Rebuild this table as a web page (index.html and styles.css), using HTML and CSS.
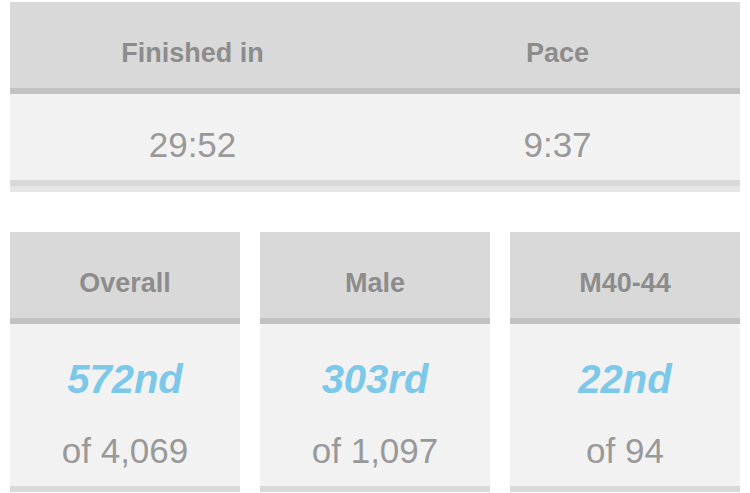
FILE: index.html
```html
<!doctype html>
<html lang="en">
<head>
    <meta charset="UTF-8">
    <meta name="viewport" content="width=device-width, initial-scale=1.0">
    <title>Race Result</title>
    <link rel="stylesheet" href="styles.css">
</head>
<body>
    <section class="result--summary">
        <div class="summary--col">
            <div class="panel--head">Finished in</div>
            <div class="panel--body">29:52</div>
        </div>
        <div class="summary--col">
            <div class="panel--head">Pace</div>
            <div class="panel--body">9:37</div>
        </div>
    </section>

    <section class="result--places">
        <div class="place--card">
            <div class="panel--head">Overall</div>
            <div class="place--body">
                <div class="place--rank">572nd</div>
                <div class="place--total">of 4,069</div>
            </div>
        </div>
        <div class="place--card">
            <div class="panel--head">Male</div>
            <div class="place--body">
                <div class="place--rank">303rd</div>
                <div class="place--total">of 1,097</div>
            </div>
        </div>
        <div class="place--card">
            <div class="panel--head">M40-44</div>
            <div class="place--body">
                <div class="place--rank">22nd</div>
                <div class="place--total">of 94</div>
            </div>
        </div>
    </section>
</body>
</html>
```

FILE: styles.css
```css
* {
    box-sizing: border-box;
}

body {
    margin: 2px 10px 0;
    background: #ffffff;
    font-family: "Liberation Sans", Arial, sans-serif;
    text-align: center;
}

.result--summary {
    display: grid;
    grid-template-columns: 1fr 1fr;
    border-bottom: 6px solid #e6e6e6;
}

.panel--head {
    height: 92px;
    padding-top: 36px;
    background: #d9d9d9;
    border-bottom: 6px solid #c2c2c2;
    color: #8c8c8c;
    font-size: 27px;
    font-weight: bold;
    line-height: 30px;
}

.panel--body {
    height: 92px;
    padding-top: 31px;
    background: #f2f2f2;
    border-bottom: 6px solid #d9d9d9;
    color: #999999;
    font-size: 35px;
    line-height: 40px;
}

.result--places {
    display: grid;
    grid-template-columns: repeat(3, 1fr);
    gap: 20px;
    margin-top: 40px;
}

.place--body {
    height: 168px;
    padding-top: 32px;
    background: #f2f2f2;
    border-bottom: 6px solid #d9d9d9;
}

.place--rank {
    color: #7cc8e8;
    font-size: 40px;
    font-weight: bold;
    font-style: italic;
    line-height: 46px;
}

.place--total {
    margin-top: 29px;
    color: #999999;
    font-size: 35px;
    line-height: 40px;
}
```
